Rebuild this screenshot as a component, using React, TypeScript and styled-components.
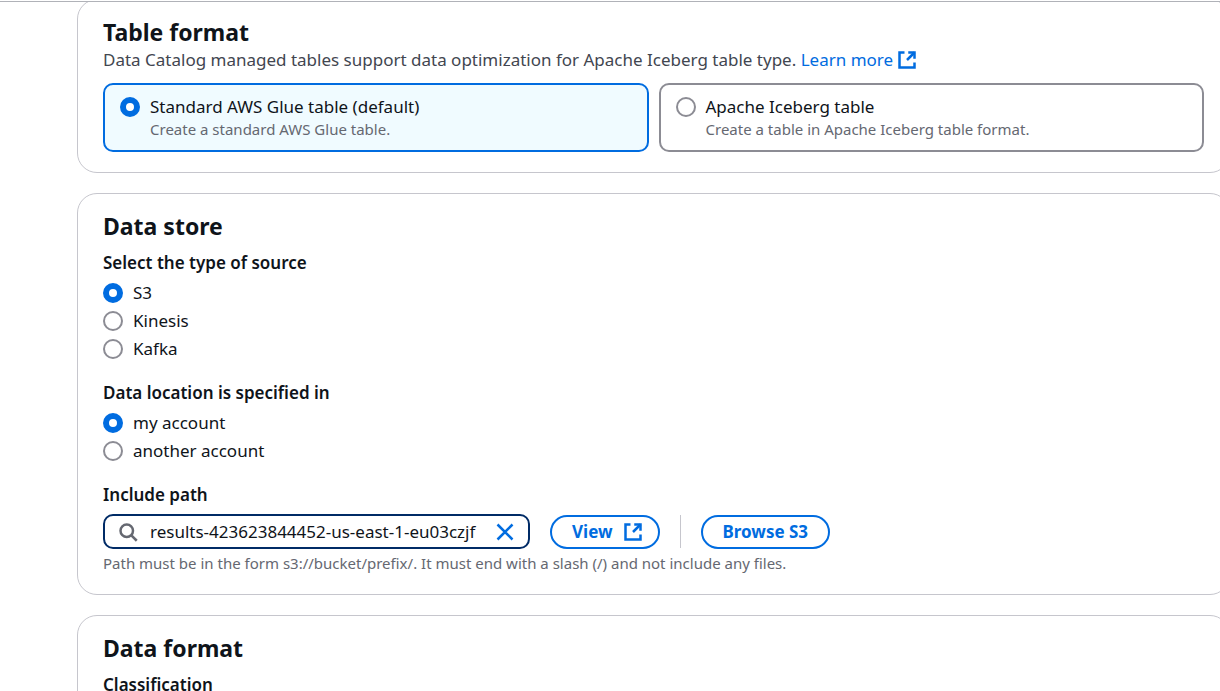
import React, { useEffect, useRef, useState } from "react";
import styled, { createGlobalStyle } from "styled-components";

const GlobalStyle = createGlobalStyle`
  *, *::before, *::after { box-sizing: border-box; }
  body {
    margin: 0;
    background: #ffffff;
    color: #0f141a;
    font-family: "Noto Sans", "Open Sans", sans-serif;
    font-size: 17px;
    line-height: 24px;
  }
`;

const Page = styled.div`
  display: flex;
  flex-direction: column;
  height: 100vh;
  overflow: hidden;
`;

const TopBar = styled.header`
  flex: none;
  height: 2px;
  background: #ffffff;
  border-bottom: 1px solid #b0b2b8;
  z-index: 1;
`;

const Content = styled.main`
  flex: 1;
  min-height: 0;
  display: flex;
  flex-direction: column;
  gap: 20px;
  margin: -3px -10px 0 77px;
  overflow: hidden;
`;

const Card = styled.section`
  flex: none;
  padding: 16px 25px 20px;
  border: 1px solid #c6c6cd;
  border-radius: 20px;
  background: #ffffff;
`;

const Title = styled.h2`
  margin: 0;
  font-size: 23px;
  line-height: 32px;
  font-weight: 700;
`;

const Description = styled.p`
  margin: 0;
  color: #424650;
`;

const Link = styled.a`
  display: inline-flex;
  align-items: center;
  gap: 4px;
  color: #006ce0;
  text-decoration: none;
`;

const Tiles = styled.div`
  display: grid;
  grid-template-columns: 1fr 1fr;
  gap: 10px;
  margin-top: 11px;
`;

const Tile = styled.label<{ $selected: boolean }>`
  display: grid;
  grid-template-columns: 20px 1fr;
  column-gap: 10px;
  padding: 10px 15px;
  border: 2px solid ${(p) => (p.$selected ? "#006ce0" : "#8c8c94")};
  border-radius: 10px;
  background: ${(p) => (p.$selected ? "#f0fbff" : "#ffffff")};
`;

const Radio = styled.input.attrs({ type: "radio" })`
  appearance: none;
  flex: none;
  align-self: center;
  width: 20px;
  height: 20px;
  margin: 0;
  border: 2px solid #8c8c94;
  border-radius: 50%;
  background: #ffffff;
  &:checked { border: 6px solid #006ce0; }
`;

const Hint = styled.span`
  display: block;
  color: #656871;
  font-size: 15px;
  line-height: 21px;
`;

const TileHint = styled(Hint)`
  grid-column: 2;
`;

const Group = styled.fieldset`
  margin: 0 0 18px;
  padding: 0;
  border: 0;
  min-width: 0;
`;

const Legend = styled.legend`
  padding: 0;
  margin: 0 0 4px;
  font-weight: 600;
`;

const Choice = styled.label`
  display: flex;
  gap: 10px;
  height: 28px;
  align-items: center;
`;

const Fields = styled.div`
  margin-top: 9px;
`;

const Label = styled.label`
  display: block;
  font-weight: 600;
`;

const PathRow = styled.div`
  display: flex;
  align-items: center;
  gap: 20px;
  margin: 7px 0 4px;
`;

const SearchBox = styled.div`
  display: flex;
  align-items: center;
  width: 427px;
  height: 35px;
  padding: 0 13px;
  border: 2px solid #002b66;
  border-radius: 10px;
`;

const PathInput = styled.input`
  flex: 1;
  min-width: 0;
  margin: 0 11px 0 12px;
  padding: 0;
  border: 0;
  outline: 0;
  background: none;
  color: #0f141a;
  font: inherit;
`;

const ClearButton = styled.button`
  display: flex;
  padding: 0;
  border: 0;
  background: none;
  color: #006ce0;
`;

const Button = styled.button<{ $trailingIcon?: boolean }>`
  display: flex;
  align-items: center;
  gap: 10px;
  height: 34px;
  padding: 0 ${(p) => (p.$trailingIcon ? 15 : 20)}px 0 20px;
  border: 2px solid #006ce0;
  border-radius: 20px;
  background: #ffffff;
  color: #006ce0;
  font: inherit;
  font-weight: 700;
`;

const Divider = styled.div`
  width: 1px;
  height: 33px;
  background: #c6c6cd;
`;

const Svg = styled.svg`
  flex: none;
  width: 20px;
  height: 20px;
  fill: none;
  stroke: currentColor;
  stroke-width: 2;
`;

const SearchIcon = styled(Svg)`
  color: #656871;
`;

const ExternalIcon = () => (
  <Svg viewBox="0 0 16 16" aria-hidden="true">
    <path d="M9 2h5v5" />
    <path d="m8 8 6-6" />
    <path d="M14 10v4H2V2h4" />
  </Svg>
);

type RadioGroupProps = { legend: string; name: string; options: string[] };

const RadioGroup = ({ legend, name, options }: RadioGroupProps) => (
  <Group>
    <Legend>{legend}</Legend>
    {options.map((option, i) => (
      <Choice key={option}>
        <Radio name={name} defaultChecked={i === 0} />
        {option}
      </Choice>
    ))}
  </Group>
);

const formats = [
  { title: "Standard AWS Glue table (default)", hint: "Create a standard AWS Glue table." },
  { title: "Apache Iceberg table", hint: "Create a table in Apache Iceberg table format." },
];

export default function App() {
  const [format, setFormat] = useState(0);
  const [path, setPath] = useState("results-423623844452-us-east-1-eu03czjf");
  const inputRef = useRef<HTMLInputElement>(null);

  useEffect(() => {
    const el = inputRef.current;
    if (el) el.scrollLeft = el.scrollWidth;
  }, []);

  return (
    <Page>
      <GlobalStyle />
      <TopBar />
      <Content>
        <Card>
          <Title>Table format</Title>
          <Description>
            Data Catalog managed tables support data optimization for Apache Iceberg table type.{" "}
            <Link href="#">Learn more <ExternalIcon /></Link>
          </Description>
          <Tiles>
            {formats.map((f, i) => (
              <Tile key={f.title} $selected={format === i}>
                <Radio name="format" checked={format === i} onChange={() => setFormat(i)} />
                <span>{f.title}</span>
                <TileHint>{f.hint}</TileHint>
              </Tile>
            ))}
          </Tiles>
        </Card>

        <Card>
          <Title>Data store</Title>
          <Fields>
            <RadioGroup legend="Select the type of source" name="source" options={["S3", "Kinesis", "Kafka"]} />
            <RadioGroup legend="Data location is specified in" name="location" options={["my account", "another account"]} />
            <Label htmlFor="path">Include path</Label>
            <PathRow>
              <SearchBox>
                <SearchIcon viewBox="0 0 16 16" aria-hidden="true">
                  <circle cx="7" cy="7" r="5" />
                  <path d="m15 15-4.5-4.5" />
                </SearchIcon>
                <PathInput id="path" ref={inputRef} value={path} onChange={(e) => setPath(e.target.value)} />
                <ClearButton type="button" aria-label="Clear" onClick={() => setPath("")}>
                  <Svg viewBox="0 0 16 16" aria-hidden="true">
                    <path d="m2 2 12 12M14 2 2 14" />
                  </Svg>
                </ClearButton>
              </SearchBox>
              <Button type="button" $trailingIcon>View <ExternalIcon /></Button>
              <Divider />
              <Button type="button">Browse S3</Button>
            </PathRow>
            <Hint>Path must be in the form s3://bucket/prefix/. It must end with a slash (/) and not include any files.</Hint>
          </Fields>
        </Card>

        <Card>
          <Title>Data format</Title>
          <Fields>
            <Legend as="div">Classification</Legend>
          </Fields>
        </Card>
      </Content>
    </Page>
  );
}
